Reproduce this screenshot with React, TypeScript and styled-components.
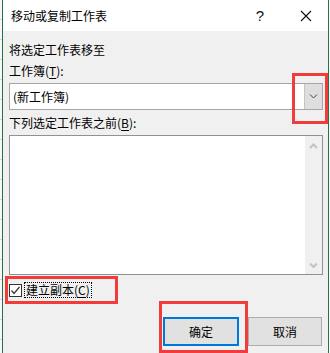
import styled, { createGlobalStyle } from 'styled-components'

const GlobalStyle = createGlobalStyle`
  html, body {
    margin: 0;
    padding: 0;
    background: #ffffff;
  }
  body {
    font-family: "Noto Sans CJK SC", "Microsoft YaHei", sans-serif;
    font-size: 12px;
    color: #000;
  }
`

const Page = styled.div`
  position: relative;
  width: 330px;
  height: 353px;
  display: flex;
  overflow: hidden;
`

const SheetEdge = styled.div`
  width: 2px;
  background: repeating-linear-gradient(
    to bottom,
    #f7f7f7 0px,
    #f7f7f7 19px,
    #d4d4d4 19px,
    #d4d4d4 20px
  );
`

const Dialog = styled.div`
  width: 325px;
  border-left: 1px solid #217346;
  border-right: 1px solid #217346;
  display: flex;
  flex-direction: column;
  background: #f0f0f0;
`

const TitleBar = styled.div`
  height: 31px;
  background: #ffffff;
  display: flex;
  align-items: center;
  padding-left: 8px;
`

const Title = styled.span`
  flex: 1;
  font-size: 12px;
  line-height: 16px;
`

const HelpButton = styled.span`
  width: 14px;
  margin-right: 33px;
  font-family: "Liberation Sans", Arial, sans-serif;
  font-size: 15px;
  color: #111;
  text-align: center;
`

const CloseButton = styled.span`
  width: 12px;
  height: 12px;
  margin-right: 16px;
  display: flex;
`

const Body = styled.div`
  flex: 1;
  display: flex;
  flex-direction: column;
  padding: 0 5px 0 6px;
`

const Label = styled.div<{ $top: number }>`
  margin-top: ${({ $top }) => $top}px;
  height: 16px;
  line-height: 16px;
  white-space: nowrap;
`

const Key = styled.span`
  text-decoration: underline;
  text-underline-offset: 2px;
`

const Combo = styled.div`
  margin-top: 4px;
  height: 27px;
  box-sizing: border-box;
  border: 1px solid #a6a6a6;
  background: #ffffff;
  display: flex;
`

const ComboText = styled.div`
  flex: 1;
  padding-left: 3px;
  line-height: 25px;
`

const ComboButton = styled.div`
  width: 17px;
  background: #dedede;
  border-left: 1px solid #c4c4c4;
  display: flex;
  align-items: center;
  justify-content: center;
`

const ListBox = styled.div`
  margin-top: 4px;
  height: 140px;
  box-sizing: border-box;
  border: 1px solid #8d9199;
  background: #ffffff;
  display: flex;
  justify-content: flex-end;
`

const ScrollBar = styled.div`
  width: 17px;
  background: #f0f0f0;
  display: flex;
  flex-direction: column;
  justify-content: space-between;
  align-items: center;
  padding: 7px 0 6px;
`

const CheckRow = styled.label`
  margin-top: 7px;
  height: 16px;
  display: flex;
  align-items: center;
  gap: 2px;
`

const Box = styled.span`
  width: 13px;
  height: 13px;
  box-sizing: border-box;
  border: 1px solid #333333;
  background: #ffffff;
  display: flex;
  align-items: center;
  justify-content: center;
`

const CheckText = styled.span`
  border: 1px dotted #000;
  padding: 0 1px 0 1px;
  line-height: 14px;
`

const ButtonRow = styled.div`
  margin-top: 19px;
  display: flex;
  justify-content: flex-end;
  gap: 9px;
  margin-right: 1px;
`

const Button = styled.button<{ $default?: boolean; $w: number }>`
  width: ${({ $w }) => $w}px;
  height: 29px;
  box-sizing: border-box;
  background: #e1e1e1;
  border: ${({ $default }) => ($default ? '2px solid #0078d7' : '1px solid #adadad')};
  font-family: inherit;
  font-size: 12px;
  color: #000;
  padding: 0;
`

const Mark = styled.div<{ $x: number; $y: number; $w: number; $h: number }>`
  position: absolute;
  left: ${({ $x }) => $x}px;
  top: ${({ $y }) => $y}px;
  width: ${({ $w }) => $w}px;
  height: ${({ $h }) => $h}px;
  box-sizing: border-box;
  border: 3px solid #f23b3b;
  pointer-events: none;
`

const Chevron = ({ up, color, w }: { up?: boolean; color: string; w: number }) => (
  <svg width={w + 2} height={w / 2 + 3} viewBox={`0 0 ${w + 2} ${w / 2 + 3}`}>
    <polyline
      points={
        up
          ? `1,${w / 2 + 1.5} ${w / 2 + 1},1.5 ${w + 1},${w / 2 + 1.5}`
          : `1,1.5 ${w / 2 + 1},${w / 2 + 1.5} ${w + 1},1.5`
      }
      fill="none"
      stroke={color}
      strokeWidth={up || color !== '#444' ? 2 : 1}
    />
  </svg>
)

export default function App() {
  return (
    <Page>
      <GlobalStyle />
      <SheetEdge />
      <Dialog>
        <TitleBar>
          <Title>移动或复制工作表</Title>
          <HelpButton>?</HelpButton>
          <CloseButton>
            <svg width="12" height="12" viewBox="0 0 12 12">
              <path d="M1 1 L11 11 M11 1 L1 11" stroke="#111" strokeWidth="1.1" />
            </svg>
          </CloseButton>
        </TitleBar>
        <Body>
          <Label $top={11}>将选定工作表移至</Label>
          <Label $top={5}>
            工作簿(<Key>T</Key>):
          </Label>
          <Combo>
            <ComboText>(新工作簿)</ComboText>
            <ComboButton>
              <Chevron color="#444" w={7} />
            </ComboButton>
          </Combo>
          <Label $top={5}>
            下列选定工作表之前(<Key>B</Key>):
          </Label>
          <ListBox>
            <ScrollBar>
              <Chevron up color="#c2c2c2" w={7} />
              <Chevron color="#c2c2c2" w={7} />
            </ScrollBar>
          </ListBox>
          <CheckRow>
            <Box>
              <svg width="11" height="11" viewBox="0 0 11 11">
                <polyline points="1.5,5.5 4,8.5 9.5,2" fill="none" stroke="#333" strokeWidth="1.2" />
              </svg>
            </Box>
            <CheckText>
              建立副本(<Key>C</Key>)
            </CheckText>
          </CheckRow>
          <ButtonRow>
            <Button $default $w={76}>确定</Button>
            <Button $w={74}>取消</Button>
          </ButtonRow>
        </Body>
      </Dialog>
      <Mark $x={292} $y={73} $w={36} $h={51} />
      <Mark $x={5} $y={276} $w={113} $h={28} />
      <Mark $x={159} $y={301} $w={89} $h={52} />
    </Page>
  )
}
